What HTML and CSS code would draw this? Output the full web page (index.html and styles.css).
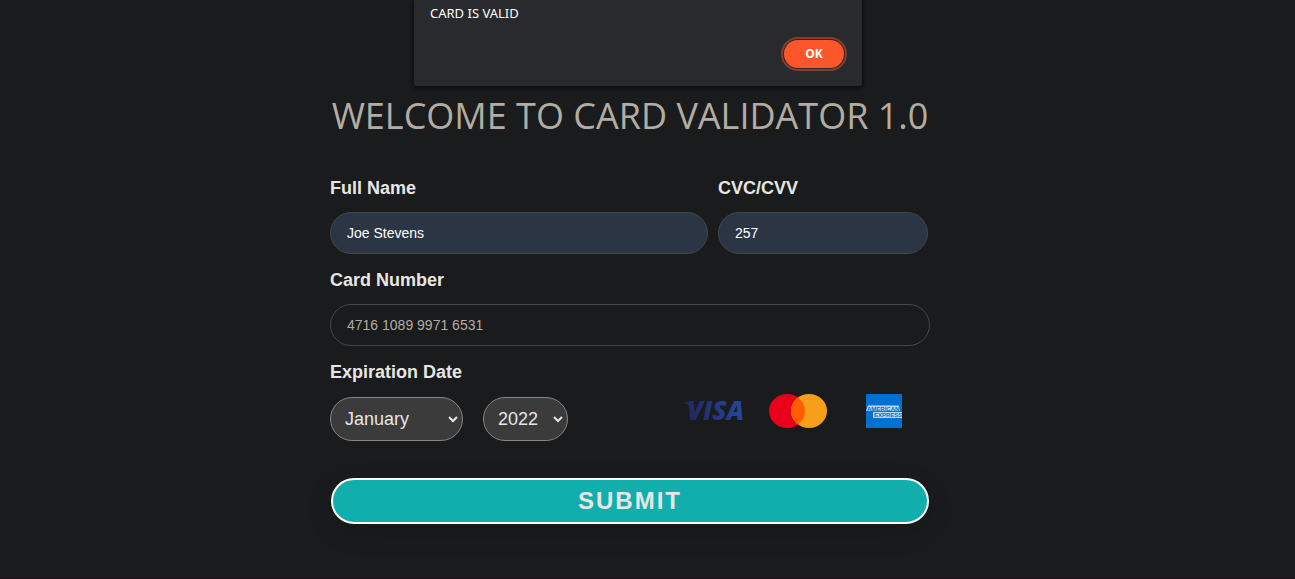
FILE: index.html
```html
<!DOCTYPE html>
<html lang="en">
<head>
<meta charset="utf-8">
<title>Card Validator</title>
<meta name="viewport" content="width=device-width, initial-scale=1">
<link rel="stylesheet" href="styles.css">
</head>
<body>
<div class="dialog-layer">
  <div class="dialog" role="alertdialog" aria-labelledby="dialog-message">
    <p class="dialog-message" id="dialog-message">CARD IS VALID</p>
    <button class="dialog-ok" type="button">OK</button>
  </div>
</div>
<main class="page">
  <h1 class="title">WELCOME TO CARD VALIDATOR 1.0</h1>
  <form class="form">
    <div class="row">
      <div class="field field-name">
        <label class="label" for="name">Full Name</label>
        <input class="input filled" id="name" type="text" value="Joe Stevens">
      </div>
      <div class="field field-cvc">
        <label class="label" for="cvc">CVC/CVV</label>
        <input class="input filled" id="cvc" type="text" value="257">
      </div>
    </div>
    <div class="field">
      <label class="label" for="number">Card Number</label>
      <input class="input" id="number" type="text" value="4716 1089 9971 6531">
    </div>
    <div class="field">
      <label class="label" for="month">Expiration Date</label>
      <div class="expiry">
        <span class="select-wrap month">
          <select class="select" id="month"><option>January</option></select>
          <svg class="chevron" viewBox="0 0 10 8" aria-hidden="true"><path d="M1 2l4 4 4-4"/></svg>
        </span>
        <span class="select-wrap year">
          <select class="select" aria-label="Expiration year"><option>2022</option></select>
          <svg class="chevron" viewBox="0 0 10 8" aria-hidden="true"><path d="M1 2l4 4 4-4"/></svg>
        </span>
        <div class="brands">
          <svg class="visa" viewBox="0 0 62 34" role="img" aria-label="Visa">
            <defs>
              <linearGradient id="visa-blue" gradientUnits="userSpaceOnUse" x1="0" y1="27" x2="62" y2="7">
                <stop offset="0" stop-color="#222357"/>
                <stop offset="1" stop-color="#254aa5"/>
              </linearGradient>
            </defs>
            <path d="M0 8.400 0.200 8h8q1.500 0 1.800 1.500l2 9.500Q8 10.500 0 8.400z" fill="url(#visa-blue)"/>
            <text class="visa-text" x="4" y="26" fill="url(#visa-blue)">VISA</text>
          </svg>
          <svg class="mastercard" viewBox="0 0 58 34" role="img" aria-label="Mastercard">
            <ellipse cx="18" cy="17" rx="18" ry="17" fill="#eb001b"/>
            <ellipse cx="40" cy="17" rx="18" ry="17" fill="#f79e1b"/>
            <path d="M29 3.500a18 17 0 0 1 0 27a18 17 0 0 1 0-27z" fill="#ff5f00"/>
          </svg>
          <svg class="amex" viewBox="0 0 36 34" role="img" aria-label="American Express">
            <rect width="36" height="34" fill="#0070d1"/>
            <path d="M2 11.500h31l1 5.500H0zM7 18h29v6H7z" fill="#b9d7f2"/>
            <text class="amex-text" x="1" y="16.500">AMERICAN</text>
            <text class="amex-text" x="8" y="23.300">EXPRESS</text>
          </svg>
        </div>
      </div>
    </div>
    <button class="submit" type="button">SUBMIT</button>
  </form>
</main>
</body>
</html>
```
FILE: styles.css
```css
* { box-sizing: border-box; }

body {
  margin: 0;
  min-height: 100vh;
  background: #1a1b1c;
  color: #e8e6e3;
  font-family: "Liberation Sans", Arial, sans-serif;
  border-bottom: 1px solid #1d121c;
}

.dialog-layer {
  position: absolute;
  top: 0;
  left: 0;
  right: 0;
  display: flex;
  justify-content: center;
  padding-right: 19px;
}

.dialog {
  display: flex;
  flex-direction: column;
  width: 448px;
  padding: 4px 16px 16px;
  background: #292a2d;
  border-radius: 0 0 3px 3px;
  box-shadow: 0 1px 4px 1px rgba(0, 0, 0, 0.6);
  font-family: "Noto Sans", sans-serif;
}

.dialog-message {
  margin: 0 0 18px;
  font-size: 13px;
  line-height: 18px;
  color: #fff;
}

.dialog-ok {
  align-self: flex-end;
  width: 60px;
  height: 28px;
  margin: 0 2px 2px;
  padding: 0;
  border: 0;
  border-radius: 14px;
  outline: 2px solid #843d2e;
  outline-offset: 1px;
  background: #fe562b;
  color: #fff;
  font: 700 12px/28px "Open Sans", sans-serif;
}

.page {
  display: flex;
  flex-direction: column;
  align-items: center;
  padding: 91px 35px 54px 0;
}

.title {
  margin: 0 0 37px;
  color: #b2aca2;
  font: 400 36px/49px "Open Sans", sans-serif;
}

.form {
  display: flex;
  flex-direction: column;
  gap: 15px;
  width: 100%;
  max-width: 600px;
}

.row {
  display: flex;
  gap: 10px;
  padding-right: 2px;
}

.field {
  display: flex;
  flex-direction: column;
  gap: 12px;
  min-width: 0;
}

.field-name { flex: 9; }
.field-cvc { flex: 5; }

.label {
  font-size: 18px;
  font-weight: 700;
  line-height: 23px;
}

.input {
  width: 100%;
  height: 42px;
  padding: 0 16px;
  border: 1px solid #43474a;
  border-radius: 21px;
  background: transparent;
  color: #b2aca2;
  font: 14px "Liberation Sans", Arial, sans-serif;
}

.filled {
  background: #2b3544;
  color: #fff;
}

.expiry {
  display: flex;
  align-items: flex-start;
  gap: 20px;
  padding-top: 1px;
}

.select-wrap { position: relative; }
.month { width: 133px; }
.year { width: 85px; }

.select {
  display: block;
  width: 100%;
  height: 44px;
  padding: 0 14px;
  appearance: none;
  border: 1px solid #86868a;
  border-radius: 22px;
  background: #3b3b3b;
  color: #e8e6e3;
  font: 18px "Liberation Sans", Arial, sans-serif;
}

.chevron {
  position: absolute;
  top: 18px;
  right: 5px;
  width: 10px;
  height: 8px;
  fill: none;
  stroke: #e8e6e3;
  stroke-width: 2;
  pointer-events: none;
}

.brands {
  display: flex;
  align-items: center;
  height: 28px;
  margin-left: auto;
  padding-right: 28px;
}

.visa { width: 62px; height: 34px; margin-right: 24px; overflow: visible; }
.visa-text { font: italic 800 26px "Open Sans", sans-serif; }
.mastercard { width: 58px; height: 34px; margin-right: 39px; }
.amex { width: 36px; height: 34px; }
.amex-text { font: 700 6px "Liberation Sans", Arial, sans-serif; fill: #0070d1; }

.submit {
  height: 46px;
  margin: 22px 1px 0;
  padding: 0;
  border: 2px solid #fff;
  border-radius: 23px;
  background: #10aeac;
  box-shadow: 0 8px 28px rgba(0, 0, 0, 0.12);
  color: #e8e6e3;
  font: 700 24px "Liberation Sans", Arial, sans-serif;
  letter-spacing: 2px;
}
```
